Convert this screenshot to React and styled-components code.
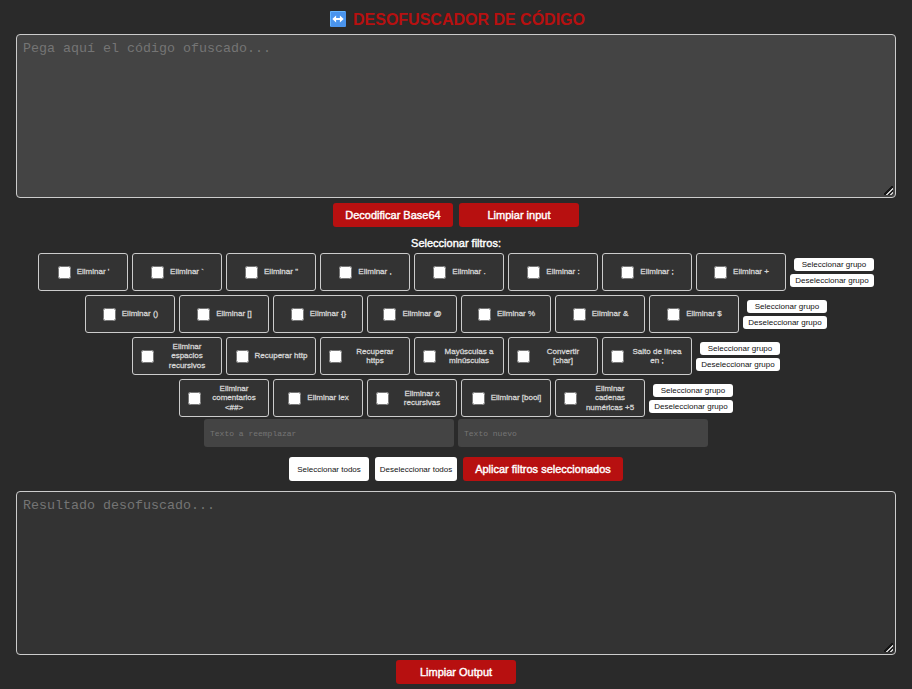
import React from "react";
import styled, { createGlobalStyle, css } from "styled-components";

const GlobalStyle = createGlobalStyle`
  * { box-sizing: border-box; }
  body {
    margin: 0;
    background: #2a2a2a;
    color: #fff;
    font-family: "Liberation Sans", Arial, sans-serif;
    overflow: hidden;
  }
`;

const Page = styled.main`
  display: flex;
  flex-direction: column;
  align-items: center;
  padding: 0 16px;
  height: 689px;
`;

const Title = styled.h1`
  display: flex;
  align-items: center;
  gap: 7px;
  height: 34px;
  margin: 0;
  padding: 4px 0 0 3px;
  color: #b71010;
  font-size: 16px;
  line-height: 18px;
`;

const TitleText = styled.span`
  padding-top: 2px;
`;

const TitleIcon = styled.svg`
  display: block;
  width: 16px;
  height: 16px;
`;

const CodeArea = styled.textarea`
  display: block;
  flex: none;
  width: 100%;
  height: 164px;
  margin: ${(p) => (p.$output ? "10px 0 0" : "0")};
  padding: 6px;
  border: 1px solid #ccc;
  border-radius: 4px;
  background: ${(p) => (p.$output ? "#333" : "#444")};
  color: #fff;
  font: 13.333px/16px "Liberation Mono", "Courier New", monospace;
  resize: vertical;
  outline: none;
  &::placeholder { color: #757575; }
  &::-webkit-resizer {
    background: linear-gradient(
      135deg,
      transparent 5.4px,
      #161616 5.6px 7.2px,
      #ccc 7.4px 8.9px,
      #222 9.1px 10.2px,
      #ccc 10.4px 11.6px,
      transparent 11.8px
    ) 4px 4px / 9px 9px no-repeat;
  }
`;

const Actions = styled.div`
  display: flex;
  gap: 6px;
  margin-top: ${(p) => p.$top}px;
`;

const Button = styled.button`
  width: ${(p) => p.$width}px;
  height: 24px;
  padding: 0;
  border: 0;
  border-radius: 3px;
  white-space: nowrap;
  font-family: inherit;
  ${(p) =>
    p.$light
      ? css`
          background: #fff;
          color: #111;
          font-size: 8px;
        `
      : css`
          background: #b71010;
          color: #fff;
          font-size: 11px;
          -webkit-text-stroke: 0.4px #fff;
        `}
`;

const GroupButton = styled.button`
  width: ${(p) => p.$width}px;
  height: 13px;
  padding: 0;
  border: 0;
  border-radius: 3px;
  background: #fff;
  color: #111;
  font-family: inherit;
  font-size: 8px;
  line-height: 13px;
  white-space: nowrap;
`;

const FiltersHeading = styled.h2`
  margin: 9px 0 3px;
  font-size: 11px;
  font-weight: 400;
  line-height: 14px;
  -webkit-text-stroke: 0.4px #fff;
`;

const FilterGroups = styled.section`
  display: flex;
  flex-direction: column;
  align-items: center;
  gap: 4px;
`;

const FilterRow = styled.div`
  display: flex;
  align-items: center;
  gap: 4px;
`;

const FilterItem = styled.label`
  display: flex;
  align-items: center;
  justify-content: center;
  width: 90px;
  height: 38px;
  padding: 0 5px;
  border: 1px solid #ccc;
  border-radius: 3px;
  background: #333;
`;

const FilterCheckbox = styled.input`
  flex: none;
  width: 13px;
  height: 13px;
  margin: 1px 6px 0 3px;
`;

const FilterText = styled.span`
  margin-right: 2px;
  color: #d4d4d4;
  font-size: 8px;
  line-height: 9.5px;
  text-align: center;
  -webkit-text-stroke: 0.3px #d4d4d4;
`;

const GroupActions = styled.div`
  display: flex;
  flex-direction: column;
  align-items: flex-end;
  gap: 3px;
`;

const ReplaceRow = styled.div`
  display: flex;
  gap: 4px;
  margin-top: 2px;
`;

const ReplaceInput = styled.input`
  width: 250px;
  height: 28px;
  padding: 1px 6px 0;
  border: 0;
  border-radius: 3px;
  background: #444;
  color: #fff;
  font: 8px "Liberation Mono", "Courier New", monospace;
  outline: none;
  &::placeholder { color: #757575; }
`;

const GROUPS = [
  ["Eliminar '", "Eliminar `", 'Eliminar "', "Eliminar ,", "Eliminar .", "Eliminar :", "Eliminar ;", "Eliminar +"],
  ["Eliminar ()", "Eliminar []", "Eliminar {}", "Eliminar @", "Eliminar %", "Eliminar &", "Eliminar $"],
  ["Eliminar espacios recursivos", "Recuperar http", "Recuperar https", "Mayúsculas a minúsculas", "Convertir [char]", "Salto de línea en ;"],
  ["Eliminar comentarios <##>", "Eliminar iex", "Eliminar x recursivas", "Eliminar [bool]", "Eliminar cadenas numéricas +5"],
];

function ArrowsIcon() {
  return (
    <TitleIcon viewBox="0 0 16 16" aria-hidden="true">
      <rect width="16" height="16" rx="1" fill="#4a94ed" />
      <path d="M.5 15V1Q.5.5 1 .5h14" fill="none" stroke="#65b5ff" />
      <path d="M2.3 8l3.8-3.6v2.6h3.8V4.4L13.7 8l-3.8 3.6V9H6.1v2.6z" fill="#fff" />
    </TitleIcon>
  );
}

function FilterGroup({ filters }) {
  return (
    <FilterRow>
      {filters.map((name) => (
        <FilterItem key={name}>
          <FilterCheckbox type="checkbox" />
          <FilterText>{name}</FilterText>
        </FilterItem>
      ))}
      <GroupActions>
        <GroupButton $width={80}>Seleccionar grupo</GroupButton>
        <GroupButton $width={84}>Deseleccionar grupo</GroupButton>
      </GroupActions>
    </FilterRow>
  );
}

export default function App() {
  return (
    <>
      <GlobalStyle />
      <Page>
        <Title>
          <ArrowsIcon />
          <TitleText>DESOFUSCADOR DE CÓDIGO</TitleText>
        </Title>
        <CodeArea placeholder="Pega aquí el código ofuscado..." spellCheck={false} />
        <Actions $top={5}>
          <Button $width={120}>Decodificar Base64</Button>
          <Button $width={120}>Limpiar input</Button>
        </Actions>
        <FiltersHeading>Seleccionar filtros:</FiltersHeading>
        <FilterGroups>
          {GROUPS.map((filters) => (
            <FilterGroup key={filters[0]} filters={filters} />
          ))}
        </FilterGroups>
        <ReplaceRow>
          <ReplaceInput placeholder="Texto a reemplazar" />
          <ReplaceInput placeholder="Texto nuevo" />
        </ReplaceRow>
        <Actions $top={10}>
          <Button $light $width={80}>Seleccionar todos</Button>
          <Button $light $width={82}>Deseleccionar todos</Button>
          <Button $width={160}>Aplicar filtros seleccionados</Button>
        </Actions>
        <CodeArea $output placeholder="Resultado desofuscado..." spellCheck={false} />
        <Actions $top={5}>
          <Button $width={120}>Limpiar Output</Button>
        </Actions>
      </Page>
    </>
  );
}
